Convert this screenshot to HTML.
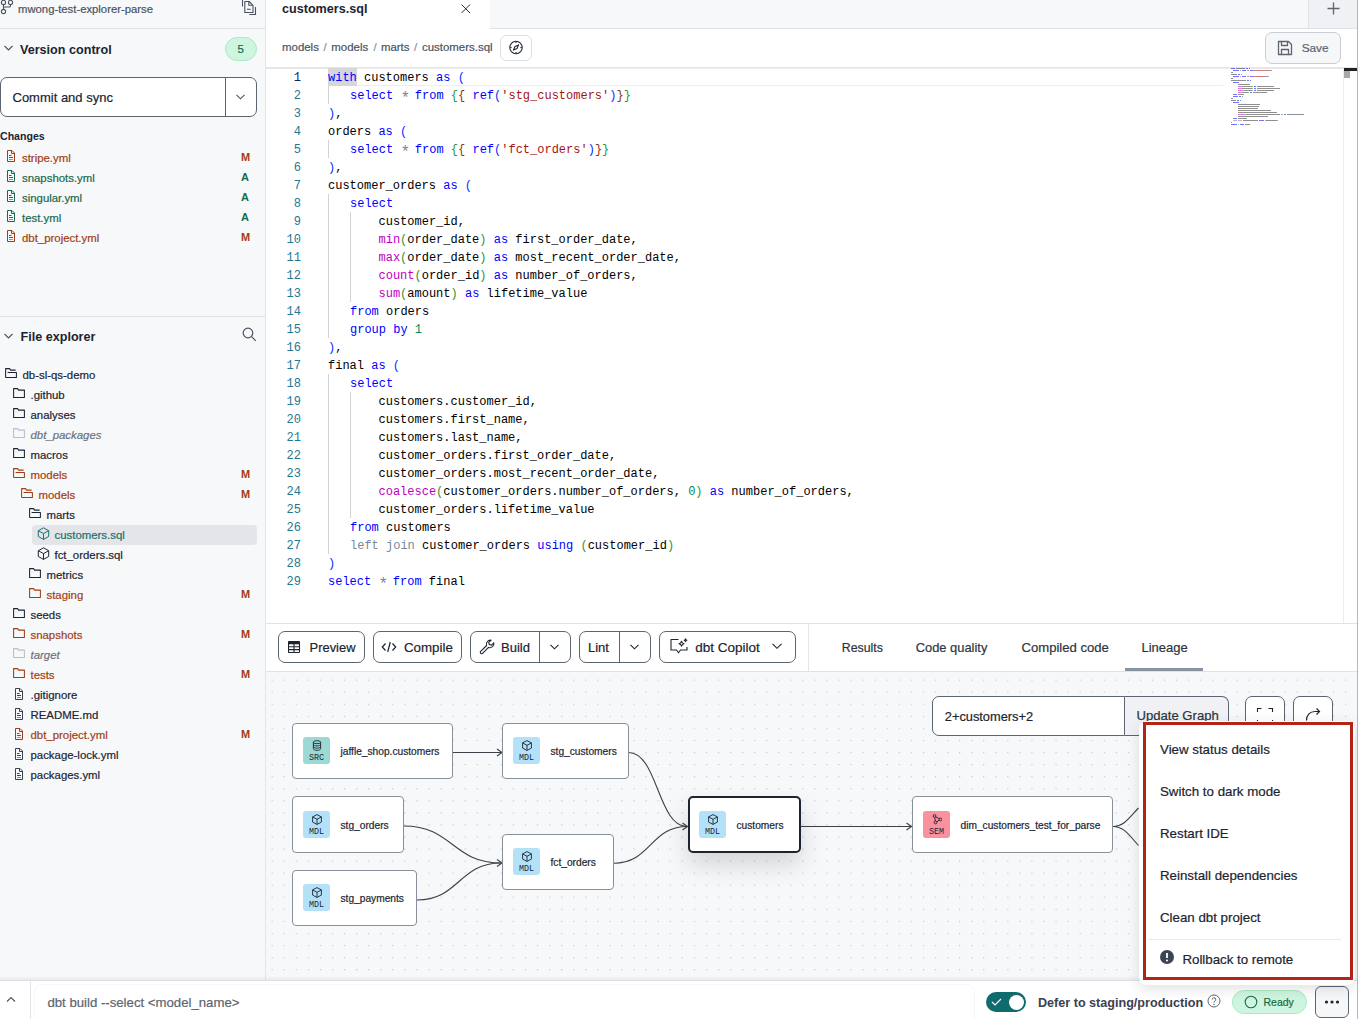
<!DOCTYPE html>
<html><head><meta charset="utf-8"><style>
html,body{margin:0;padding:0;}
body{width:1358px;height:1019px;overflow:hidden;position:relative;background:#f7f8fa;font-family:'Liberation Sans', sans-serif;}
.t{position:absolute;white-space:pre;-webkit-text-stroke-width:0.2px;}
.r{position:absolute;box-sizing:border-box;}
</style></head><body>
<div class="r" style="left:0px;top:0px;width:266px;height:1019px;background:#f7f8fa;"></div><div class="r" style="left:265px;top:0px;width:1px;height:981px;background:#e1e4e8;"></div><svg class="r" style="left:0px;top:0px;" width="16" height="16" viewBox="0 0 16 16" fill="none"><g stroke="#4b5363" stroke-width="1.1" fill="none"><circle cx="3.5" cy="2.4" r="2.1"/><circle cx="10.5" cy="2.4" r="2.1"/><circle cx="3.5" cy="11.5" r="2.1"/><path d="M3.5 4.5v4.9M10.5 4.5v1.2c0 .9-.5 1.3-1.3 1.3H3.5"/></g></svg><div class="t" style="left:18px;top:1.08px;font-size:11.3px;line-height:16px;color:#4b5363;font-family:'Liberation Sans', sans-serif;">mwong-test-explorer-parse</div><svg class="r" style="left:241px;top:0px;" width="17" height="16" viewBox="0 0 17 16" fill="none"><g stroke="#4b5363" stroke-width="1.1" stroke-linejoin="round" fill="none"><path d="M1.5 0v6.5"/><path d="M3.8 1.5h4.4l3.8 3.8v7.2H3.8z"/><path d="M7.8 1.5v3.8h4"/><path d="M6 9.3h3.5"/><path d="M14.5 7v7.5h-6.2"/></g></svg><div class="r" style="left:0px;top:28px;width:265px;height:1px;background:#dfe2e7;"></div><svg class="r" style="left:3px;top:43px;" width="11" height="10" viewBox="0 0 11 10" fill="none"><path d="M1.5 3l4 4 4-4" stroke="#4b5363" stroke-width="1.1" fill="none"/></svg><div class="t" style="left:20px;top:41.43px;font-size:12.6px;line-height:18px;color:#1c2431;font-family:'Liberation Sans', sans-serif;font-weight:bold;-webkit-text-stroke-width:0;">Version control</div><div class="r" style="left:225px;top:37px;width:32px;height:24px;background:#cdf5df;border:1px solid #a9ebc6;border-radius:12px;"></div><div class="t" style="left:237.5px;top:41.02px;font-size:11.5px;line-height:16px;color:#176b43;font-family:'Liberation Sans', sans-serif;">5</div><div class="r" style="left:0px;top:77px;width:257px;height:40px;background:#fff;border:1px solid #5d6471;border-radius:7px;"></div><div class="r" style="left:225px;top:77px;width:1px;height:40px;background:#5d6471;"></div><div class="t" style="left:12.5px;top:88.50px;font-size:13px;line-height:18px;color:#1c2431;font-family:'Liberation Sans', sans-serif;">Commit and sync</div><svg class="r" style="left:235px;top:93px;" width="11" height="8" viewBox="0 0 11 8" fill="none"><path d="M1.5 1.8l4 4 4-4" stroke="#4b5363" stroke-width="1.1" fill="none"/></svg><div class="t" style="left:0px;top:128.83px;font-size:10.6px;line-height:15px;color:#1c2431;font-family:'Liberation Sans', sans-serif;font-weight:bold;-webkit-text-stroke-width:0;">Changes</div><svg class="r" style="left:6px;top:150.0px;" width="10" height="13" viewBox="0 0 10 13" fill="none"><g stroke="#a23d13" stroke-width="1" stroke-linejoin="round" fill="none"><path d="M1.5 0.5h4.5l2.5 2.5v8.5h-7z"/><path d="M5.5 0.5v3h3"/><path d="M3 5.5h2.5M3 7.5h4"/><path d="M3 9.5h4" opacity="0.6"/></g></svg><div class="t" style="left:22px;top:149.55px;font-size:11.4px;line-height:16px;color:#a23d13;font-family:'Liberation Sans', sans-serif;">stripe.yml</div><div class="t" style="left:241px;top:150.19px;font-size:11px;line-height:15px;color:#a23d13;font-family:'Liberation Sans', sans-serif;font-weight:bold;-webkit-text-stroke-width:0;">M</div><svg class="r" style="left:6px;top:170.0px;" width="10" height="13" viewBox="0 0 10 13" fill="none"><g stroke="#17694a" stroke-width="1" stroke-linejoin="round" fill="none"><path d="M1.5 0.5h4.5l2.5 2.5v8.5h-7z"/><path d="M5.5 0.5v3h3"/><path d="M3 5.5h2.5M3 7.5h4"/><path d="M3 9.5h4" opacity="0.6"/></g></svg><div class="t" style="left:22px;top:169.55px;font-size:11.4px;line-height:16px;color:#17694a;font-family:'Liberation Sans', sans-serif;">snapshots.yml</div><div class="t" style="left:241px;top:170.19px;font-size:11px;line-height:15px;color:#17694a;font-family:'Liberation Sans', sans-serif;font-weight:bold;-webkit-text-stroke-width:0;">A</div><svg class="r" style="left:6px;top:190.0px;" width="10" height="13" viewBox="0 0 10 13" fill="none"><g stroke="#17694a" stroke-width="1" stroke-linejoin="round" fill="none"><path d="M1.5 0.5h4.5l2.5 2.5v8.5h-7z"/><path d="M5.5 0.5v3h3"/><path d="M3 5.5h2.5M3 7.5h4"/><path d="M3 9.5h4" opacity="0.6"/></g></svg><div class="t" style="left:22px;top:189.55px;font-size:11.4px;line-height:16px;color:#17694a;font-family:'Liberation Sans', sans-serif;">singular.yml</div><div class="t" style="left:241px;top:190.19px;font-size:11px;line-height:15px;color:#17694a;font-family:'Liberation Sans', sans-serif;font-weight:bold;-webkit-text-stroke-width:0;">A</div><svg class="r" style="left:6px;top:210.0px;" width="10" height="13" viewBox="0 0 10 13" fill="none"><g stroke="#17694a" stroke-width="1" stroke-linejoin="round" fill="none"><path d="M1.5 0.5h4.5l2.5 2.5v8.5h-7z"/><path d="M5.5 0.5v3h3"/><path d="M3 5.5h2.5M3 7.5h4"/><path d="M3 9.5h4" opacity="0.6"/></g></svg><div class="t" style="left:22px;top:209.55px;font-size:11.4px;line-height:16px;color:#17694a;font-family:'Liberation Sans', sans-serif;">test.yml</div><div class="t" style="left:241px;top:210.19px;font-size:11px;line-height:15px;color:#17694a;font-family:'Liberation Sans', sans-serif;font-weight:bold;-webkit-text-stroke-width:0;">A</div><svg class="r" style="left:6px;top:230.0px;" width="10" height="13" viewBox="0 0 10 13" fill="none"><g stroke="#a23d13" stroke-width="1" stroke-linejoin="round" fill="none"><path d="M1.5 0.5h4.5l2.5 2.5v8.5h-7z"/><path d="M5.5 0.5v3h3"/><path d="M3 5.5h2.5M3 7.5h4"/><path d="M3 9.5h4" opacity="0.6"/></g></svg><div class="t" style="left:22px;top:229.55px;font-size:11.4px;line-height:16px;color:#a23d13;font-family:'Liberation Sans', sans-serif;">dbt_project.yml</div><div class="t" style="left:241px;top:230.19px;font-size:11px;line-height:15px;color:#a23d13;font-family:'Liberation Sans', sans-serif;font-weight:bold;-webkit-text-stroke-width:0;">M</div><div class="r" style="left:0px;top:316px;width:265px;height:1px;background:#dfe2e7;"></div><svg class="r" style="left:3px;top:331px;" width="11" height="10" viewBox="0 0 11 10" fill="none"><path d="M1.5 3l4 4 4-4" stroke="#4b5363" stroke-width="1.1" fill="none"/></svg><div class="t" style="left:20.5px;top:327.63px;font-size:12.6px;line-height:18px;color:#1c2431;font-family:'Liberation Sans', sans-serif;font-weight:bold;-webkit-text-stroke-width:0;">File explorer</div><svg class="r" style="left:242px;top:327px;" width="15" height="15" viewBox="0 0 15 15" fill="none"><g stroke="#4b5363" stroke-width="1.2"><circle cx="6" cy="6" r="4.8"/><path d="M9.6 9.6l4.2 4.2"/></g></svg><svg class="r" style="left:5px;top:368px;" width="13" height="12" viewBox="0 0 13 12" fill="none"><g stroke="#1c2431" stroke-width="1.05" stroke-linejoin="round" fill="none"><path d="M0.6 9.5V0.6H4.6L5.6 2.1H10.6"/><path d="M2.6 4.5H11.4V9.5H0.6"/></g></svg><div class="t" style="left:22.5px;top:366.55px;font-size:11.4px;line-height:16px;color:#1c2431;font-family:'Liberation Sans', sans-serif;">db-sl-qs-demo</div><svg class="r" style="left:13px;top:388px;" width="13" height="12" viewBox="0 0 13 12" fill="none"><g stroke="#1c2431" stroke-width="1.05" stroke-linejoin="round" fill="none"><path d="M0.6 9.5V0.6H4.6L5.6 2.1H11.4V9.5Z"/></g></svg><div class="t" style="left:30.5px;top:386.55px;font-size:11.4px;line-height:16px;color:#1c2431;font-family:'Liberation Sans', sans-serif;">.github</div><svg class="r" style="left:13px;top:408px;" width="13" height="12" viewBox="0 0 13 12" fill="none"><g stroke="#1c2431" stroke-width="1.05" stroke-linejoin="round" fill="none"><path d="M0.6 9.5V0.6H4.6L5.6 2.1H11.4V9.5Z"/></g></svg><div class="t" style="left:30.5px;top:406.55px;font-size:11.4px;line-height:16px;color:#1c2431;font-family:'Liberation Sans', sans-serif;">analyses</div><svg class="r" style="left:13px;top:428px;" width="13" height="12" viewBox="0 0 13 12" fill="none"><g stroke="#b9bec6" stroke-width="1.05" stroke-linejoin="round" fill="none"><path d="M0.6 9.5V0.6H4.6L5.6 2.1H11.4V9.5Z"/></g></svg><div class="t" style="left:30.5px;top:426.55px;font-size:11.4px;line-height:16px;color:#6b7280;font-family:'Liberation Sans', sans-serif;font-style:italic;">dbt_packages</div><svg class="r" style="left:13px;top:448px;" width="13" height="12" viewBox="0 0 13 12" fill="none"><g stroke="#1c2431" stroke-width="1.05" stroke-linejoin="round" fill="none"><path d="M0.6 9.5V0.6H4.6L5.6 2.1H11.4V9.5Z"/></g></svg><div class="t" style="left:30.5px;top:446.55px;font-size:11.4px;line-height:16px;color:#1c2431;font-family:'Liberation Sans', sans-serif;">macros</div><svg class="r" style="left:13px;top:468px;" width="13" height="12" viewBox="0 0 13 12" fill="none"><g stroke="#a23d13" stroke-width="1.05" stroke-linejoin="round" fill="none"><path d="M0.6 9.5V0.6H4.6L5.6 2.1H10.6"/><path d="M2.6 4.5H11.4V9.5H0.6"/></g></svg><div class="t" style="left:30.5px;top:466.55px;font-size:11.4px;line-height:16px;color:#a23d13;font-family:'Liberation Sans', sans-serif;">models</div><div class="t" style="left:241px;top:467.19px;font-size:11px;line-height:15px;color:#a23d13;font-family:'Liberation Sans', sans-serif;font-weight:bold;-webkit-text-stroke-width:0;">M</div><svg class="r" style="left:21px;top:488px;" width="13" height="12" viewBox="0 0 13 12" fill="none"><g stroke="#a23d13" stroke-width="1.05" stroke-linejoin="round" fill="none"><path d="M0.6 9.5V0.6H4.6L5.6 2.1H10.6"/><path d="M2.6 4.5H11.4V9.5H0.6"/></g></svg><div class="t" style="left:38.5px;top:486.55px;font-size:11.4px;line-height:16px;color:#a23d13;font-family:'Liberation Sans', sans-serif;">models</div><div class="t" style="left:241px;top:487.19px;font-size:11px;line-height:15px;color:#a23d13;font-family:'Liberation Sans', sans-serif;font-weight:bold;-webkit-text-stroke-width:0;">M</div><svg class="r" style="left:29px;top:508px;" width="13" height="12" viewBox="0 0 13 12" fill="none"><g stroke="#1c2431" stroke-width="1.05" stroke-linejoin="round" fill="none"><path d="M0.6 9.5V0.6H4.6L5.6 2.1H10.6"/><path d="M2.6 4.5H11.4V9.5H0.6"/></g></svg><div class="t" style="left:46.5px;top:506.55px;font-size:11.4px;line-height:16px;color:#1c2431;font-family:'Liberation Sans', sans-serif;">marts</div><div class="r" style="left:32px;top:525px;width:225px;height:20px;background:#e3e5e9;border-radius:4px;"></div><svg class="r" style="left:37px;top:527px;" width="13" height="13" viewBox="0 0 13 13" fill="none"><g stroke="#1b7070" stroke-width="1" stroke-linejoin="round"><path d="M6.5 0.8l5.2 2.9v5.8l-5.2 2.9-5.2-2.9V3.7z"/><path d="M1.3 3.7l5.2 2.9 5.2-2.9M6.5 6.6v5.8"/></g></svg><div class="t" style="left:54.5px;top:526.55px;font-size:11.4px;line-height:16px;color:#1b7070;font-family:'Liberation Sans', sans-serif;">customers.sql</div><svg class="r" style="left:37px;top:547px;" width="13" height="13" viewBox="0 0 13 13" fill="none"><g stroke="#1c2431" stroke-width="1" stroke-linejoin="round"><path d="M6.5 0.8l5.2 2.9v5.8l-5.2 2.9-5.2-2.9V3.7z"/><path d="M1.3 3.7l5.2 2.9 5.2-2.9M6.5 6.6v5.8"/></g></svg><div class="t" style="left:54.5px;top:546.55px;font-size:11.4px;line-height:16px;color:#1c2431;font-family:'Liberation Sans', sans-serif;">fct_orders.sql</div><svg class="r" style="left:29px;top:568px;" width="13" height="12" viewBox="0 0 13 12" fill="none"><g stroke="#1c2431" stroke-width="1.05" stroke-linejoin="round" fill="none"><path d="M0.6 9.5V0.6H4.6L5.6 2.1H11.4V9.5Z"/></g></svg><div class="t" style="left:46.5px;top:566.55px;font-size:11.4px;line-height:16px;color:#1c2431;font-family:'Liberation Sans', sans-serif;">metrics</div><svg class="r" style="left:29px;top:588px;" width="13" height="12" viewBox="0 0 13 12" fill="none"><g stroke="#a23d13" stroke-width="1.05" stroke-linejoin="round" fill="none"><path d="M0.6 9.5V0.6H4.6L5.6 2.1H11.4V9.5Z"/></g></svg><div class="t" style="left:46.5px;top:586.55px;font-size:11.4px;line-height:16px;color:#a23d13;font-family:'Liberation Sans', sans-serif;">staging</div><div class="t" style="left:241px;top:587.19px;font-size:11px;line-height:15px;color:#a23d13;font-family:'Liberation Sans', sans-serif;font-weight:bold;-webkit-text-stroke-width:0;">M</div><svg class="r" style="left:13px;top:608px;" width="13" height="12" viewBox="0 0 13 12" fill="none"><g stroke="#1c2431" stroke-width="1.05" stroke-linejoin="round" fill="none"><path d="M0.6 9.5V0.6H4.6L5.6 2.1H11.4V9.5Z"/></g></svg><div class="t" style="left:30.5px;top:606.55px;font-size:11.4px;line-height:16px;color:#1c2431;font-family:'Liberation Sans', sans-serif;">seeds</div><svg class="r" style="left:13px;top:628px;" width="13" height="12" viewBox="0 0 13 12" fill="none"><g stroke="#a23d13" stroke-width="1.05" stroke-linejoin="round" fill="none"><path d="M0.6 9.5V0.6H4.6L5.6 2.1H11.4V9.5Z"/></g></svg><div class="t" style="left:30.5px;top:626.55px;font-size:11.4px;line-height:16px;color:#a23d13;font-family:'Liberation Sans', sans-serif;">snapshots</div><div class="t" style="left:241px;top:627.19px;font-size:11px;line-height:15px;color:#a23d13;font-family:'Liberation Sans', sans-serif;font-weight:bold;-webkit-text-stroke-width:0;">M</div><svg class="r" style="left:13px;top:648px;" width="13" height="12" viewBox="0 0 13 12" fill="none"><g stroke="#b9bec6" stroke-width="1.05" stroke-linejoin="round" fill="none"><path d="M0.6 9.5V0.6H4.6L5.6 2.1H11.4V9.5Z"/></g></svg><div class="t" style="left:30.5px;top:646.55px;font-size:11.4px;line-height:16px;color:#6b7280;font-family:'Liberation Sans', sans-serif;font-style:italic;">target</div><svg class="r" style="left:13px;top:668px;" width="13" height="12" viewBox="0 0 13 12" fill="none"><g stroke="#a23d13" stroke-width="1.05" stroke-linejoin="round" fill="none"><path d="M0.6 9.5V0.6H4.6L5.6 2.1H11.4V9.5Z"/></g></svg><div class="t" style="left:30.5px;top:666.55px;font-size:11.4px;line-height:16px;color:#a23d13;font-family:'Liberation Sans', sans-serif;">tests</div><div class="t" style="left:241px;top:667.19px;font-size:11px;line-height:15px;color:#a23d13;font-family:'Liberation Sans', sans-serif;font-weight:bold;-webkit-text-stroke-width:0;">M</div><svg class="r" style="left:14px;top:688px;" width="10" height="13" viewBox="0 0 10 13" fill="none"><g stroke="#3b4250" stroke-width="1" stroke-linejoin="round" fill="none"><path d="M1.5 0.5h4.5l2.5 2.5v8.5h-7z"/><path d="M5.5 0.5v3h3"/><path d="M3 5.5h2.5M3 7.5h4"/><path d="M3 9.5h4" opacity="0.6"/></g></svg><div class="t" style="left:30.5px;top:686.55px;font-size:11.4px;line-height:16px;color:#1c2431;font-family:'Liberation Sans', sans-serif;">.gitignore</div><svg class="r" style="left:14px;top:708px;" width="10" height="13" viewBox="0 0 10 13" fill="none"><g stroke="#3b4250" stroke-width="1" stroke-linejoin="round" fill="none"><path d="M1.5 0.5h4.5l2.5 2.5v8.5h-7z"/><path d="M5.5 0.5v3h3"/><path d="M3 5.5h2.5M3 7.5h4"/><path d="M3 9.5h4" opacity="0.6"/></g></svg><div class="t" style="left:30.5px;top:706.55px;font-size:11.4px;line-height:16px;color:#1c2431;font-family:'Liberation Sans', sans-serif;">README.md</div><svg class="r" style="left:14px;top:728px;" width="10" height="13" viewBox="0 0 10 13" fill="none"><g stroke="#a23d13" stroke-width="1" stroke-linejoin="round" fill="none"><path d="M1.5 0.5h4.5l2.5 2.5v8.5h-7z"/><path d="M5.5 0.5v3h3"/><path d="M3 5.5h2.5M3 7.5h4"/><path d="M3 9.5h4" opacity="0.6"/></g></svg><div class="t" style="left:30.5px;top:726.55px;font-size:11.4px;line-height:16px;color:#a23d13;font-family:'Liberation Sans', sans-serif;">dbt_project.yml</div><div class="t" style="left:241px;top:727.19px;font-size:11px;line-height:15px;color:#a23d13;font-family:'Liberation Sans', sans-serif;font-weight:bold;-webkit-text-stroke-width:0;">M</div><svg class="r" style="left:14px;top:748px;" width="10" height="13" viewBox="0 0 10 13" fill="none"><g stroke="#3b4250" stroke-width="1" stroke-linejoin="round" fill="none"><path d="M1.5 0.5h4.5l2.5 2.5v8.5h-7z"/><path d="M5.5 0.5v3h3"/><path d="M3 5.5h2.5M3 7.5h4"/><path d="M3 9.5h4" opacity="0.6"/></g></svg><div class="t" style="left:30.5px;top:746.55px;font-size:11.4px;line-height:16px;color:#1c2431;font-family:'Liberation Sans', sans-serif;">package-lock.yml</div><svg class="r" style="left:14px;top:768px;" width="10" height="13" viewBox="0 0 10 13" fill="none"><g stroke="#3b4250" stroke-width="1" stroke-linejoin="round" fill="none"><path d="M1.5 0.5h4.5l2.5 2.5v8.5h-7z"/><path d="M5.5 0.5v3h3"/><path d="M3 5.5h2.5M3 7.5h4"/><path d="M3 9.5h4" opacity="0.6"/></g></svg><div class="t" style="left:30.5px;top:766.55px;font-size:11.4px;line-height:16px;color:#1c2431;font-family:'Liberation Sans', sans-serif;">packages.yml</div><div class="r" style="left:266px;top:0px;width:1092px;height:28px;background:#f7f8fa;"></div><div class="r" style="left:266px;top:28px;width:1092px;height:1px;background:#dfe2e7;"></div><div class="r" style="left:266px;top:0px;width:224px;height:29px;background:#fff;"></div><div class="t" style="left:282px;top:-0.37px;font-size:12.6px;line-height:18px;color:#1c2431;font-family:'Liberation Sans', sans-serif;font-weight:bold;-webkit-text-stroke-width:0;">customers.sql</div><svg class="r" style="left:460px;top:3px;" width="11" height="11" viewBox="0 0 11 11" fill="none"><path d="M1.5 1.5l8.5 8.5M10 1.5l-8.5 8.5" stroke="#1c2431" stroke-width="0.95"/></svg><div class="r" style="left:1308px;top:0px;width:50px;height:28px;background:#f0f1f4;border-left:1px solid #dfe2e7;"></div><svg class="r" style="left:1327px;top:2px;" width="13" height="13" viewBox="0 0 13 13" fill="none"><path d="M6.5 0.5v12M0.5 6.5h12" stroke="#5d6471" stroke-width="1.3"/></svg><div class="r" style="left:266px;top:29px;width:1092px;height:39px;background:#fff;"></div><div class="t" style="left:282px;top:39.03px;font-size:11.45px;line-height:16px;color:#4b5363;font-family:'Liberation Sans', sans-serif;">models</div><div class="t" style="left:323.5px;top:39.03px;font-size:11.45px;line-height:16px;color:#8a909a;font-family:'Liberation Sans', sans-serif;">/</div><div class="t" style="left:331.3px;top:39.03px;font-size:11.45px;line-height:16px;color:#4b5363;font-family:'Liberation Sans', sans-serif;">models</div><div class="t" style="left:373.5px;top:39.03px;font-size:11.45px;line-height:16px;color:#8a909a;font-family:'Liberation Sans', sans-serif;">/</div><div class="t" style="left:380.9px;top:39.03px;font-size:11.45px;line-height:16px;color:#4b5363;font-family:'Liberation Sans', sans-serif;">marts</div><div class="t" style="left:414px;top:39.03px;font-size:11.45px;line-height:16px;color:#8a909a;font-family:'Liberation Sans', sans-serif;">/</div><div class="t" style="left:422px;top:39.03px;font-size:11.45px;line-height:16px;color:#4b5363;font-family:'Liberation Sans', sans-serif;">customers.sql</div><div class="r" style="left:500px;top:35px;width:32px;height:26px;background:#fff;border:1px solid #dde0e5;border-radius:6px;"></div><svg class="r" style="left:508px;top:40px;" width="16" height="16" viewBox="0 0 16 16" fill="none"><g stroke="#1c2431" stroke-width="1.1"><circle cx="8" cy="7.5" r="6.2"/><path d="M8 1.8v1.3M8 11.9v1.3M2.3 7.5h1.3M12.4 7.5h1.3"/><path d="M10.6 4.9L9 8.5 5.4 10.1 7 6.5z" stroke-linejoin="round"/></g></svg><div class="r" style="left:1265px;top:32px;width:76px;height:32px;background:#f6f7f9;border:1px solid #c9ced6;border-radius:7px;"></div><svg class="r" style="left:1277px;top:40px;" width="16" height="16" viewBox="0 0 16 16" fill="none"><g stroke="#5d6471" stroke-width="1.3" stroke-linejoin="round"><path d="M1.5 1.5h10l3 3v10h-13z"/><path d="M4.5 1.5v4h6v-4"/><path d="M4.5 14.5v-5h7v5"/></g></svg><div class="t" style="left:1301.7px;top:40.41px;font-size:11.8px;line-height:17px;color:#5d6471;font-family:'Liberation Sans', sans-serif;">Save</div><div class="r" style="left:266px;top:67px;width:1092px;height:2px;background:#e4e6ea;"></div><div class="r" style="left:266px;top:69px;width:1092px;height:554px;background:#fff;"></div><div class="r" style="left:328px;top:68px;width:895px;height:18px;border-top:1px solid #eeeeee;border-bottom:1px solid #eeeeee;"></div><div class="r" style="left:328px;top:68px;width:29px;height:18px;background:#d7d7d7;"></div><div class="r" style="left:328px;top:86px;width:1px;height:18px;background:#d3d3d3;"></div><div class="r" style="left:328px;top:140px;width:1px;height:18px;background:#d3d3d3;"></div><div class="r" style="left:328px;top:194px;width:1px;height:144px;background:#d3d3d3;"></div><div class="r" style="left:328px;top:374px;width:1px;height:180px;background:#d3d3d3;"></div><div class="r" style="left:350px;top:212px;width:1px;height:90px;background:#d3d3d3;"></div><div class="r" style="left:350px;top:392px;width:1px;height:126px;background:#d3d3d3;"></div><div class="t" style="left:293.8px;top:70.00px;font-size:12px;line-height:17px;color:#0b216f;font-family:'Liberation Mono', monospace;-webkit-text-stroke-width:0;">1</div><div class="t" style="left:328px;top:70.00px;font-size:12px;line-height:17px;color:#000000;font-family:'Liberation Mono', monospace;-webkit-text-stroke-width:0;"><span style="color:#0000ff">with</span> customers <span style="color:#0000ff">as</span> <span style="color:#0431fa">(</span></div><div class="t" style="left:293.8px;top:88.00px;font-size:12px;line-height:17px;color:#237893;font-family:'Liberation Mono', monospace;-webkit-text-stroke-width:0;">2</div><div class="t" style="left:350px;top:88.00px;font-size:12px;line-height:17px;color:#000000;font-family:'Liberation Mono', monospace;-webkit-text-stroke-width:0;"><span style="color:#0000ff">select</span> <span style="display:inline-block;width:7.2px;text-align:center;position:relative;top:4px;font-size:16px;line-height:0;color:#778899">*</span> <span style="color:#0000ff">from</span> <span style="color:#319331">{</span><span style="color:#7b3814">{</span> <span style="color:#0000ff">ref</span><span style="color:#0431fa">(</span><span style="color:#a31515">'stg_customers'</span><span style="color:#0431fa">)</span><span style="color:#7b3814">}</span><span style="color:#319331">}</span></div><div class="t" style="left:293.8px;top:106.00px;font-size:12px;line-height:17px;color:#237893;font-family:'Liberation Mono', monospace;-webkit-text-stroke-width:0;">3</div><div class="t" style="left:328px;top:106.00px;font-size:12px;line-height:17px;color:#000000;font-family:'Liberation Mono', monospace;-webkit-text-stroke-width:0;"><span style="color:#0431fa">)</span>,</div><div class="t" style="left:293.8px;top:124.00px;font-size:12px;line-height:17px;color:#237893;font-family:'Liberation Mono', monospace;-webkit-text-stroke-width:0;">4</div><div class="t" style="left:328px;top:124.00px;font-size:12px;line-height:17px;color:#000000;font-family:'Liberation Mono', monospace;-webkit-text-stroke-width:0;">orders <span style="color:#0000ff">as</span> <span style="color:#0431fa">(</span></div><div class="t" style="left:293.8px;top:142.00px;font-size:12px;line-height:17px;color:#237893;font-family:'Liberation Mono', monospace;-webkit-text-stroke-width:0;">5</div><div class="t" style="left:350px;top:142.00px;font-size:12px;line-height:17px;color:#000000;font-family:'Liberation Mono', monospace;-webkit-text-stroke-width:0;"><span style="color:#0000ff">select</span> <span style="display:inline-block;width:7.2px;text-align:center;position:relative;top:4px;font-size:16px;line-height:0;color:#778899">*</span> <span style="color:#0000ff">from</span> <span style="color:#319331">{</span><span style="color:#7b3814">{</span> <span style="color:#0000ff">ref</span><span style="color:#0431fa">(</span><span style="color:#a31515">'fct_orders'</span><span style="color:#0431fa">)</span><span style="color:#7b3814">}</span><span style="color:#319331">}</span></div><div class="t" style="left:293.8px;top:160.00px;font-size:12px;line-height:17px;color:#237893;font-family:'Liberation Mono', monospace;-webkit-text-stroke-width:0;">6</div><div class="t" style="left:328px;top:160.00px;font-size:12px;line-height:17px;color:#000000;font-family:'Liberation Mono', monospace;-webkit-text-stroke-width:0;"><span style="color:#0431fa">)</span>,</div><div class="t" style="left:293.8px;top:178.00px;font-size:12px;line-height:17px;color:#237893;font-family:'Liberation Mono', monospace;-webkit-text-stroke-width:0;">7</div><div class="t" style="left:328px;top:178.00px;font-size:12px;line-height:17px;color:#000000;font-family:'Liberation Mono', monospace;-webkit-text-stroke-width:0;">customer_orders <span style="color:#0000ff">as</span> <span style="color:#0431fa">(</span></div><div class="t" style="left:293.8px;top:196.00px;font-size:12px;line-height:17px;color:#237893;font-family:'Liberation Mono', monospace;-webkit-text-stroke-width:0;">8</div><div class="t" style="left:350px;top:196.00px;font-size:12px;line-height:17px;color:#000000;font-family:'Liberation Mono', monospace;-webkit-text-stroke-width:0;"><span style="color:#0000ff">select</span></div><div class="t" style="left:293.8px;top:214.00px;font-size:12px;line-height:17px;color:#237893;font-family:'Liberation Mono', monospace;-webkit-text-stroke-width:0;">9</div><div class="t" style="left:378.5px;top:214.00px;font-size:12px;line-height:17px;color:#000000;font-family:'Liberation Mono', monospace;-webkit-text-stroke-width:0;">customer_id,</div><div class="t" style="left:286.6px;top:232.00px;font-size:12px;line-height:17px;color:#237893;font-family:'Liberation Mono', monospace;-webkit-text-stroke-width:0;">10</div><div class="t" style="left:378.5px;top:232.00px;font-size:12px;line-height:17px;color:#000000;font-family:'Liberation Mono', monospace;-webkit-text-stroke-width:0;"><span style="color:#c000c0">min</span><span style="color:#319331">(</span>order_date<span style="color:#319331">)</span> <span style="color:#0000ff">as</span> first_order_date,</div><div class="t" style="left:286.6px;top:250.00px;font-size:12px;line-height:17px;color:#237893;font-family:'Liberation Mono', monospace;-webkit-text-stroke-width:0;">11</div><div class="t" style="left:378.5px;top:250.00px;font-size:12px;line-height:17px;color:#000000;font-family:'Liberation Mono', monospace;-webkit-text-stroke-width:0;"><span style="color:#c000c0">max</span><span style="color:#319331">(</span>order_date<span style="color:#319331">)</span> <span style="color:#0000ff">as</span> most_recent_order_date,</div><div class="t" style="left:286.6px;top:268.00px;font-size:12px;line-height:17px;color:#237893;font-family:'Liberation Mono', monospace;-webkit-text-stroke-width:0;">12</div><div class="t" style="left:378.5px;top:268.00px;font-size:12px;line-height:17px;color:#000000;font-family:'Liberation Mono', monospace;-webkit-text-stroke-width:0;"><span style="color:#c000c0">count</span><span style="color:#319331">(</span>order_id<span style="color:#319331">)</span> <span style="color:#0000ff">as</span> number_of_orders,</div><div class="t" style="left:286.6px;top:286.00px;font-size:12px;line-height:17px;color:#237893;font-family:'Liberation Mono', monospace;-webkit-text-stroke-width:0;">13</div><div class="t" style="left:378.5px;top:286.00px;font-size:12px;line-height:17px;color:#000000;font-family:'Liberation Mono', monospace;-webkit-text-stroke-width:0;"><span style="color:#c000c0">sum</span><span style="color:#319331">(</span>amount<span style="color:#319331">)</span> <span style="color:#0000ff">as</span> lifetime_value</div><div class="t" style="left:286.6px;top:304.00px;font-size:12px;line-height:17px;color:#237893;font-family:'Liberation Mono', monospace;-webkit-text-stroke-width:0;">14</div><div class="t" style="left:350px;top:304.00px;font-size:12px;line-height:17px;color:#000000;font-family:'Liberation Mono', monospace;-webkit-text-stroke-width:0;"><span style="color:#0000ff">from</span> orders</div><div class="t" style="left:286.6px;top:322.00px;font-size:12px;line-height:17px;color:#237893;font-family:'Liberation Mono', monospace;-webkit-text-stroke-width:0;">15</div><div class="t" style="left:350px;top:322.00px;font-size:12px;line-height:17px;color:#000000;font-family:'Liberation Mono', monospace;-webkit-text-stroke-width:0;"><span style="color:#0000ff">group</span> <span style="color:#0000ff">by</span> <span style="color:#098658">1</span></div><div class="t" style="left:286.6px;top:340.00px;font-size:12px;line-height:17px;color:#237893;font-family:'Liberation Mono', monospace;-webkit-text-stroke-width:0;">16</div><div class="t" style="left:328px;top:340.00px;font-size:12px;line-height:17px;color:#000000;font-family:'Liberation Mono', monospace;-webkit-text-stroke-width:0;"><span style="color:#0431fa">)</span>,</div><div class="t" style="left:286.6px;top:358.00px;font-size:12px;line-height:17px;color:#237893;font-family:'Liberation Mono', monospace;-webkit-text-stroke-width:0;">17</div><div class="t" style="left:328px;top:358.00px;font-size:12px;line-height:17px;color:#000000;font-family:'Liberation Mono', monospace;-webkit-text-stroke-width:0;">final <span style="color:#0000ff">as</span> <span style="color:#0431fa">(</span></div><div class="t" style="left:286.6px;top:376.00px;font-size:12px;line-height:17px;color:#237893;font-family:'Liberation Mono', monospace;-webkit-text-stroke-width:0;">18</div><div class="t" style="left:350px;top:376.00px;font-size:12px;line-height:17px;color:#000000;font-family:'Liberation Mono', monospace;-webkit-text-stroke-width:0;"><span style="color:#0000ff">select</span></div><div class="t" style="left:286.6px;top:394.00px;font-size:12px;line-height:17px;color:#237893;font-family:'Liberation Mono', monospace;-webkit-text-stroke-width:0;">19</div><div class="t" style="left:378.5px;top:394.00px;font-size:12px;line-height:17px;color:#000000;font-family:'Liberation Mono', monospace;-webkit-text-stroke-width:0;">customers.customer_id,</div><div class="t" style="left:286.6px;top:412.00px;font-size:12px;line-height:17px;color:#237893;font-family:'Liberation Mono', monospace;-webkit-text-stroke-width:0;">20</div><div class="t" style="left:378.5px;top:412.00px;font-size:12px;line-height:17px;color:#000000;font-family:'Liberation Mono', monospace;-webkit-text-stroke-width:0;">customers.first_name,</div><div class="t" style="left:286.6px;top:430.00px;font-size:12px;line-height:17px;color:#237893;font-family:'Liberation Mono', monospace;-webkit-text-stroke-width:0;">21</div><div class="t" style="left:378.5px;top:430.00px;font-size:12px;line-height:17px;color:#000000;font-family:'Liberation Mono', monospace;-webkit-text-stroke-width:0;">customers.last_name,</div><div class="t" style="left:286.6px;top:448.00px;font-size:12px;line-height:17px;color:#237893;font-family:'Liberation Mono', monospace;-webkit-text-stroke-width:0;">22</div><div class="t" style="left:378.5px;top:448.00px;font-size:12px;line-height:17px;color:#000000;font-family:'Liberation Mono', monospace;-webkit-text-stroke-width:0;">customer_orders.first_order_date,</div><div class="t" style="left:286.6px;top:466.00px;font-size:12px;line-height:17px;color:#237893;font-family:'Liberation Mono', monospace;-webkit-text-stroke-width:0;">23</div><div class="t" style="left:378.5px;top:466.00px;font-size:12px;line-height:17px;color:#000000;font-family:'Liberation Mono', monospace;-webkit-text-stroke-width:0;">customer_orders.most_recent_order_date,</div><div class="t" style="left:286.6px;top:484.00px;font-size:12px;line-height:17px;color:#237893;font-family:'Liberation Mono', monospace;-webkit-text-stroke-width:0;">24</div><div class="t" style="left:378.5px;top:484.00px;font-size:12px;line-height:17px;color:#000000;font-family:'Liberation Mono', monospace;-webkit-text-stroke-width:0;"><span style="color:#c000c0">coalesce</span><span style="color:#319331">(</span>customer_orders.number_of_orders, <span style="color:#098658">0</span><span style="color:#319331">)</span> <span style="color:#0000ff">as</span> number_of_orders,</div><div class="t" style="left:286.6px;top:502.00px;font-size:12px;line-height:17px;color:#237893;font-family:'Liberation Mono', monospace;-webkit-text-stroke-width:0;">25</div><div class="t" style="left:378.5px;top:502.00px;font-size:12px;line-height:17px;color:#000000;font-family:'Liberation Mono', monospace;-webkit-text-stroke-width:0;">customer_orders.lifetime_value</div><div class="t" style="left:286.6px;top:520.00px;font-size:12px;line-height:17px;color:#237893;font-family:'Liberation Mono', monospace;-webkit-text-stroke-width:0;">26</div><div class="t" style="left:350px;top:520.00px;font-size:12px;line-height:17px;color:#000000;font-family:'Liberation Mono', monospace;-webkit-text-stroke-width:0;"><span style="color:#0000ff">from</span> customers</div><div class="t" style="left:286.6px;top:538.00px;font-size:12px;line-height:17px;color:#237893;font-family:'Liberation Mono', monospace;-webkit-text-stroke-width:0;">27</div><div class="t" style="left:350px;top:538.00px;font-size:12px;line-height:17px;color:#000000;font-family:'Liberation Mono', monospace;-webkit-text-stroke-width:0;"><span style="color:#778899">left join</span> customer_orders <span style="color:#0000ff">using</span> <span style="color:#319331">(</span>customer_id<span style="color:#319331">)</span></div><div class="t" style="left:286.6px;top:556.00px;font-size:12px;line-height:17px;color:#237893;font-family:'Liberation Mono', monospace;-webkit-text-stroke-width:0;">28</div><div class="t" style="left:328px;top:556.00px;font-size:12px;line-height:17px;color:#000000;font-family:'Liberation Mono', monospace;-webkit-text-stroke-width:0;"><span style="color:#0431fa">)</span></div><div class="t" style="left:286.6px;top:574.00px;font-size:12px;line-height:17px;color:#237893;font-family:'Liberation Mono', monospace;-webkit-text-stroke-width:0;">29</div><div class="t" style="left:328px;top:574.00px;font-size:12px;line-height:17px;color:#000000;font-family:'Liberation Mono', monospace;-webkit-text-stroke-width:0;"><span style="color:#0000ff">select</span> <span style="display:inline-block;width:7.2px;text-align:center;position:relative;top:4px;font-size:16px;line-height:0;color:#778899">*</span> <span style="color:#0000ff">from</span> final</div><div class="r" style="left:1231.0px;top:68.0px;width:4.0px;height:1.4px;background:#0000ff;opacity:0.55;"></div><div class="r" style="left:1236.0px;top:68.0px;width:9.0px;height:1.4px;background:#333333;opacity:0.55;"></div><div class="r" style="left:1246.0px;top:68.0px;width:2.0px;height:1.4px;background:#0000ff;opacity:0.55;"></div><div class="r" style="left:1249.0px;top:68.0px;width:1.0px;height:1.4px;background:#0431fa;opacity:0.55;"></div><div class="r" style="left:1233.0px;top:70.0px;width:6.0px;height:1.4px;background:#0000ff;opacity:0.55;"></div><div class="r" style="left:1240.0px;top:70.0px;width:1.0px;height:1.4px;background:#778899;opacity:0.55;"></div><div class="r" style="left:1242.0px;top:70.0px;width:4.0px;height:1.4px;background:#0000ff;opacity:0.55;"></div><div class="r" style="left:1247.0px;top:70.0px;width:1.0px;height:1.4px;background:#319331;opacity:0.55;"></div><div class="r" style="left:1248.0px;top:70.0px;width:1.0px;height:1.4px;background:#7b3814;opacity:0.55;"></div><div class="r" style="left:1250.0px;top:70.0px;width:3.0px;height:1.4px;background:#0000ff;opacity:0.55;"></div><div class="r" style="left:1253.0px;top:70.0px;width:1.0px;height:1.4px;background:#0431fa;opacity:0.55;"></div><div class="r" style="left:1254.0px;top:70.0px;width:15.0px;height:1.4px;background:#a31515;opacity:0.55;"></div><div class="r" style="left:1269.0px;top:70.0px;width:1.0px;height:1.4px;background:#0431fa;opacity:0.55;"></div><div class="r" style="left:1270.0px;top:70.0px;width:1.0px;height:1.4px;background:#7b3814;opacity:0.55;"></div><div class="r" style="left:1271.0px;top:70.0px;width:1.0px;height:1.4px;background:#319331;opacity:0.55;"></div><div class="r" style="left:1231.0px;top:72.0px;width:1.0px;height:1.4px;background:#0431fa;opacity:0.55;"></div><div class="r" style="left:1232.0px;top:72.0px;width:1.0px;height:1.4px;background:#333333;opacity:0.55;"></div><div class="r" style="left:1231.0px;top:74.0px;width:6.0px;height:1.4px;background:#333333;opacity:0.55;"></div><div class="r" style="left:1238.0px;top:74.0px;width:2.0px;height:1.4px;background:#0000ff;opacity:0.55;"></div><div class="r" style="left:1241.0px;top:74.0px;width:1.0px;height:1.4px;background:#0431fa;opacity:0.55;"></div><div class="r" style="left:1233.0px;top:76.0px;width:6.0px;height:1.4px;background:#0000ff;opacity:0.55;"></div><div class="r" style="left:1240.0px;top:76.0px;width:1.0px;height:1.4px;background:#778899;opacity:0.55;"></div><div class="r" style="left:1242.0px;top:76.0px;width:4.0px;height:1.4px;background:#0000ff;opacity:0.55;"></div><div class="r" style="left:1247.0px;top:76.0px;width:1.0px;height:1.4px;background:#319331;opacity:0.55;"></div><div class="r" style="left:1248.0px;top:76.0px;width:1.0px;height:1.4px;background:#7b3814;opacity:0.55;"></div><div class="r" style="left:1250.0px;top:76.0px;width:3.0px;height:1.4px;background:#0000ff;opacity:0.55;"></div><div class="r" style="left:1253.0px;top:76.0px;width:1.0px;height:1.4px;background:#0431fa;opacity:0.55;"></div><div class="r" style="left:1254.0px;top:76.0px;width:12.0px;height:1.4px;background:#a31515;opacity:0.55;"></div><div class="r" style="left:1266.0px;top:76.0px;width:1.0px;height:1.4px;background:#0431fa;opacity:0.55;"></div><div class="r" style="left:1267.0px;top:76.0px;width:1.0px;height:1.4px;background:#7b3814;opacity:0.55;"></div><div class="r" style="left:1268.0px;top:76.0px;width:1.0px;height:1.4px;background:#319331;opacity:0.55;"></div><div class="r" style="left:1231.0px;top:78.0px;width:1.0px;height:1.4px;background:#0431fa;opacity:0.55;"></div><div class="r" style="left:1232.0px;top:78.0px;width:1.0px;height:1.4px;background:#333333;opacity:0.55;"></div><div class="r" style="left:1231.0px;top:80.0px;width:15.0px;height:1.4px;background:#333333;opacity:0.55;"></div><div class="r" style="left:1247.0px;top:80.0px;width:2.0px;height:1.4px;background:#0000ff;opacity:0.55;"></div><div class="r" style="left:1250.0px;top:80.0px;width:1.0px;height:1.4px;background:#0431fa;opacity:0.55;"></div><div class="r" style="left:1233.0px;top:82.0px;width:6.0px;height:1.4px;background:#0000ff;opacity:0.55;"></div><div class="r" style="left:1238.0px;top:84.0px;width:12.0px;height:1.4px;background:#333333;opacity:0.55;"></div><div class="r" style="left:1238.0px;top:86.0px;width:3.0px;height:1.4px;background:#c000c0;opacity:0.55;"></div><div class="r" style="left:1241.0px;top:86.0px;width:1.0px;height:1.4px;background:#319331;opacity:0.55;"></div><div class="r" style="left:1242.0px;top:86.0px;width:10.0px;height:1.4px;background:#333333;opacity:0.55;"></div><div class="r" style="left:1252.0px;top:86.0px;width:1.0px;height:1.4px;background:#319331;opacity:0.55;"></div><div class="r" style="left:1254.0px;top:86.0px;width:2.0px;height:1.4px;background:#0000ff;opacity:0.55;"></div><div class="r" style="left:1257.0px;top:86.0px;width:17.0px;height:1.4px;background:#333333;opacity:0.55;"></div><div class="r" style="left:1238.0px;top:88.0px;width:3.0px;height:1.4px;background:#c000c0;opacity:0.55;"></div><div class="r" style="left:1241.0px;top:88.0px;width:1.0px;height:1.4px;background:#319331;opacity:0.55;"></div><div class="r" style="left:1242.0px;top:88.0px;width:10.0px;height:1.4px;background:#333333;opacity:0.55;"></div><div class="r" style="left:1252.0px;top:88.0px;width:1.0px;height:1.4px;background:#319331;opacity:0.55;"></div><div class="r" style="left:1254.0px;top:88.0px;width:2.0px;height:1.4px;background:#0000ff;opacity:0.55;"></div><div class="r" style="left:1257.0px;top:88.0px;width:23.0px;height:1.4px;background:#333333;opacity:0.55;"></div><div class="r" style="left:1238.0px;top:90.0px;width:5.0px;height:1.4px;background:#c000c0;opacity:0.55;"></div><div class="r" style="left:1243.0px;top:90.0px;width:1.0px;height:1.4px;background:#319331;opacity:0.55;"></div><div class="r" style="left:1244.0px;top:90.0px;width:8.0px;height:1.4px;background:#333333;opacity:0.55;"></div><div class="r" style="left:1252.0px;top:90.0px;width:1.0px;height:1.4px;background:#319331;opacity:0.55;"></div><div class="r" style="left:1254.0px;top:90.0px;width:2.0px;height:1.4px;background:#0000ff;opacity:0.55;"></div><div class="r" style="left:1257.0px;top:90.0px;width:17.0px;height:1.4px;background:#333333;opacity:0.55;"></div><div class="r" style="left:1238.0px;top:92.0px;width:3.0px;height:1.4px;background:#c000c0;opacity:0.55;"></div><div class="r" style="left:1241.0px;top:92.0px;width:1.0px;height:1.4px;background:#319331;opacity:0.55;"></div><div class="r" style="left:1242.0px;top:92.0px;width:6.0px;height:1.4px;background:#333333;opacity:0.55;"></div><div class="r" style="left:1248.0px;top:92.0px;width:1.0px;height:1.4px;background:#319331;opacity:0.55;"></div><div class="r" style="left:1250.0px;top:92.0px;width:2.0px;height:1.4px;background:#0000ff;opacity:0.55;"></div><div class="r" style="left:1253.0px;top:92.0px;width:14.0px;height:1.4px;background:#333333;opacity:0.55;"></div><div class="r" style="left:1233.0px;top:94.0px;width:4.0px;height:1.4px;background:#0000ff;opacity:0.55;"></div><div class="r" style="left:1238.0px;top:94.0px;width:6.0px;height:1.4px;background:#333333;opacity:0.55;"></div><div class="r" style="left:1233.0px;top:96.0px;width:5.0px;height:1.4px;background:#0000ff;opacity:0.55;"></div><div class="r" style="left:1239.0px;top:96.0px;width:2.0px;height:1.4px;background:#0000ff;opacity:0.55;"></div><div class="r" style="left:1242.0px;top:96.0px;width:1.0px;height:1.4px;background:#098658;opacity:0.55;"></div><div class="r" style="left:1231.0px;top:98.0px;width:1.0px;height:1.4px;background:#0431fa;opacity:0.55;"></div><div class="r" style="left:1232.0px;top:98.0px;width:1.0px;height:1.4px;background:#333333;opacity:0.55;"></div><div class="r" style="left:1231.0px;top:100.0px;width:5.0px;height:1.4px;background:#333333;opacity:0.55;"></div><div class="r" style="left:1237.0px;top:100.0px;width:2.0px;height:1.4px;background:#0000ff;opacity:0.55;"></div><div class="r" style="left:1240.0px;top:100.0px;width:1.0px;height:1.4px;background:#0431fa;opacity:0.55;"></div><div class="r" style="left:1233.0px;top:102.0px;width:6.0px;height:1.4px;background:#0000ff;opacity:0.55;"></div><div class="r" style="left:1238.0px;top:104.0px;width:22.0px;height:1.4px;background:#333333;opacity:0.55;"></div><div class="r" style="left:1238.0px;top:106.0px;width:21.0px;height:1.4px;background:#333333;opacity:0.55;"></div><div class="r" style="left:1238.0px;top:108.0px;width:20.0px;height:1.4px;background:#333333;opacity:0.55;"></div><div class="r" style="left:1238.0px;top:110.0px;width:33.0px;height:1.4px;background:#333333;opacity:0.55;"></div><div class="r" style="left:1238.0px;top:112.0px;width:39.0px;height:1.4px;background:#333333;opacity:0.55;"></div><div class="r" style="left:1238.0px;top:114.0px;width:8.0px;height:1.4px;background:#c000c0;opacity:0.55;"></div><div class="r" style="left:1246.0px;top:114.0px;width:1.0px;height:1.4px;background:#319331;opacity:0.55;"></div><div class="r" style="left:1247.0px;top:114.0px;width:33.0px;height:1.4px;background:#333333;opacity:0.55;"></div><div class="r" style="left:1281.0px;top:114.0px;width:1.0px;height:1.4px;background:#098658;opacity:0.55;"></div><div class="r" style="left:1282.0px;top:114.0px;width:1.0px;height:1.4px;background:#319331;opacity:0.55;"></div><div class="r" style="left:1284.0px;top:114.0px;width:2.0px;height:1.4px;background:#0000ff;opacity:0.55;"></div><div class="r" style="left:1287.0px;top:114.0px;width:17.0px;height:1.4px;background:#333333;opacity:0.55;"></div><div class="r" style="left:1238.0px;top:116.0px;width:30.0px;height:1.4px;background:#333333;opacity:0.55;"></div><div class="r" style="left:1233.0px;top:118.0px;width:4.0px;height:1.4px;background:#0000ff;opacity:0.55;"></div><div class="r" style="left:1238.0px;top:118.0px;width:9.0px;height:1.4px;background:#333333;opacity:0.55;"></div><div class="r" style="left:1233.0px;top:120.0px;width:4.0px;height:1.4px;background:#778899;opacity:0.55;"></div><div class="r" style="left:1238.0px;top:120.0px;width:4.0px;height:1.4px;background:#778899;opacity:0.55;"></div><div class="r" style="left:1243.0px;top:120.0px;width:15.0px;height:1.4px;background:#333333;opacity:0.55;"></div><div class="r" style="left:1259.0px;top:120.0px;width:5.0px;height:1.4px;background:#0000ff;opacity:0.55;"></div><div class="r" style="left:1265.0px;top:120.0px;width:1.0px;height:1.4px;background:#319331;opacity:0.55;"></div><div class="r" style="left:1266.0px;top:120.0px;width:11.0px;height:1.4px;background:#333333;opacity:0.55;"></div><div class="r" style="left:1277.0px;top:120.0px;width:1.0px;height:1.4px;background:#319331;opacity:0.55;"></div><div class="r" style="left:1231.0px;top:122.0px;width:1.0px;height:1.4px;background:#0431fa;opacity:0.55;"></div><div class="r" style="left:1231.0px;top:124.0px;width:6.0px;height:1.4px;background:#0000ff;opacity:0.55;"></div><div class="r" style="left:1238.0px;top:124.0px;width:1.0px;height:1.4px;background:#778899;opacity:0.55;"></div><div class="r" style="left:1240.0px;top:124.0px;width:4.0px;height:1.4px;background:#0000ff;opacity:0.55;"></div><div class="r" style="left:1245.0px;top:124.0px;width:5.0px;height:1.4px;background:#333333;opacity:0.55;"></div><div class="r" style="left:1343px;top:68px;width:15px;height:555px;background:#fff;border-left:1px solid #ececec;"></div><div class="r" style="left:1344px;top:68px;width:13px;height:2.5px;background:#222;"></div><div class="r" style="left:1344px;top:70.5px;width:6px;height:7px;background:#a8a8a8;"></div><div class="r" style="left:1357px;top:0px;width:1px;height:1019px;background:#b9b7a0;z-index:5;"></div><div class="r" style="left:266px;top:623px;width:1092px;height:1px;background:#dfe2e7;"></div><div class="r" style="left:266px;top:624px;width:1092px;height:47px;background:#fff;"></div><div class="r" style="left:266px;top:671px;width:1092px;height:1px;background:#dfe2e7;"></div><div class="r" style="left:278px;top:631px;width:87px;height:32px;background:#fff;border:1px solid #5d6471;border-radius:7px;"></div><svg class="r" style="left:288px;top:641px;" width="13" height="13" viewBox="0 0 13 13" fill="none"><rect x="0.5" y="0.5" width="11" height="11" rx="0.8" stroke="#1c2431" stroke-width="1.1" fill="none"/><rect x="0.5" y="0.5" width="11" height="2.8" fill="#1c2431"/><path d="M0.5 5.8h11M0.5 8.6h11M6 3v8.5" stroke="#1c2431" stroke-width="1.1"/></svg><div class="t" style="left:309.6px;top:638.73px;font-size:12.9px;line-height:18px;color:#1c2431;font-family:'Liberation Sans', sans-serif;">Preview</div><div class="r" style="left:373px;top:631px;width:89px;height:32px;background:#fff;border:1px solid #5d6471;border-radius:7px;"></div><svg class="r" style="left:381px;top:640px;" width="16" height="14" viewBox="0 0 16 14" fill="none"><g stroke="#1c2431" stroke-width="1.2" fill="none"><path d="M4.5 3.5L1.3 7l3.2 3.5M11.5 3.5L14.7 7l-3.2 3.5M9.3 2L6.7 12"/></g></svg><div class="t" style="left:404px;top:638.09px;font-size:13.3px;line-height:19px;color:#1c2431;font-family:'Liberation Sans', sans-serif;">Compile</div><div class="r" style="left:470px;top:631px;width:101px;height:32px;background:#fff;border:1px solid #5d6471;border-radius:7px;"></div><div class="r" style="left:539px;top:631px;width:1px;height:32px;background:#5d6471;"></div><svg class="r" style="left:478px;top:638px;" width="18" height="18" viewBox="0 0 18 18" fill="none"><path d="M13.2 2.2a4 4 0 0 0-4.6 5.3L2.7 13.4a1.3 1.3 0 0 0 1.9 1.9l5.9-5.9a4 4 0 0 0 5.3-4.6l-2.3 2.3-2.2-.6-.6-2.2z" stroke="#1c2431" stroke-width="1.1" stroke-linejoin="round" fill="none"/></svg><div class="t" style="left:501px;top:638.70px;font-size:13px;line-height:18px;color:#1c2431;font-family:'Liberation Sans', sans-serif;">Build</div><svg class="r" style="left:549px;top:643px;" width="11" height="8" viewBox="0 0 11 8" fill="none"><path d="M1.5 1.8l4 4 4-4" stroke="#1c2431" stroke-width="1.1" fill="none"/></svg><div class="r" style="left:579px;top:631px;width:72px;height:32px;background:#fff;border:1px solid #5d6471;border-radius:7px;"></div><div class="r" style="left:619px;top:631px;width:1px;height:32px;background:#5d6471;"></div><div class="t" style="left:588px;top:638.70px;font-size:13px;line-height:18px;color:#1c2431;font-family:'Liberation Sans', sans-serif;">Lint</div><svg class="r" style="left:629px;top:643px;" width="11" height="8" viewBox="0 0 11 8" fill="none"><path d="M1.5 1.8l4 4 4-4" stroke="#1c2431" stroke-width="1.1" fill="none"/></svg><div class="r" style="left:659px;top:631px;width:137px;height:32px;background:#fff;border:1px solid #5d6471;border-radius:7px;"></div><svg class="r" style="left:670px;top:638px;" width="19" height="18" viewBox="0 0 19 18" fill="none"><g stroke="#1c2431" stroke-width="1.1" fill="none" stroke-linejoin="round"><path d="M8.5 1.5H1v10.5h5.5l2 2.8 2-2.8H17V9"/><path d="M11.5 3.2c.3 1.6.9 2.2 2.5 2.5-1.6.3-2.2.9-2.5 2.5-.3-1.6-.9-2.2-2.5-2.5 1.6-.3 2.2-.9 2.5-2.5z"/><path d="M15.5 0.8c.2.9.5 1.2 1.4 1.4-.9.2-1.2.5-1.4 1.4-.2-.9-.5-1.2-1.4-1.4.9-.2 1.2-.5 1.4-1.4z"/></g></svg><div class="t" style="left:695.3px;top:638.02px;font-size:13.5px;line-height:19px;color:#1c2431;font-family:'Liberation Sans', sans-serif;">dbt Copilot</div><svg class="r" style="left:771px;top:642px;" width="12" height="9" viewBox="0 0 12 9" fill="none"><path d="M1.5 1.8l4.5 4.5 4.5-4.5" stroke="#1c2431" stroke-width="1.1" fill="none"/></svg><div class="r" style="left:808px;top:624px;width:1px;height:47px;background:#e4e6ea;"></div><div class="t" style="left:841.8px;top:639.73px;font-size:12.33px;line-height:17px;color:#2c3442;font-family:'Liberation Sans', sans-serif;">Results</div><div class="t" style="left:915.7px;top:639.03px;font-size:12.9px;line-height:18px;color:#2c3442;font-family:'Liberation Sans', sans-serif;">Code quality</div><div class="t" style="left:1021.5px;top:638.96px;font-size:13.1px;line-height:18px;color:#2c3442;font-family:'Liberation Sans', sans-serif;">Compiled code</div><div class="t" style="left:1141.5px;top:639.00px;font-size:13px;line-height:18px;color:#2c3442;font-family:'Liberation Sans', sans-serif;">Lineage</div><div class="r" style="left:1125px;top:668px;width:78px;height:3px;background:#8a93a0;"></div><svg class="r" style="left:266px;top:672px" width="1092" height="309"><defs><pattern id="dots" x="5.6" y="7.6" width="12.06" height="12.06" patternUnits="userSpaceOnUse"><rect x="0" y="0" width="1.2" height="1.2" fill="#c4c8ce"/></pattern></defs><rect width="1092" height="309" fill="#f7f8fa"/><rect width="1092" height="309" fill="url(#dots)"/></svg><svg class="r" style="left:0;top:0" width="1358" height="1019" viewBox="0 0 1358 1019" fill="none"><path d="M453 752.5H501" stroke="#3b4049" stroke-width="1.1" fill="none"/><path d="M497 749.0L502 752.5L497 756.0" stroke="#3b4049" stroke-width="1.1" fill="none"/><path d="M628.5 752.5C657.75 752.5 657.75 826.5 687 826.5" stroke="#3b4049" stroke-width="1.1" fill="none"/><path d="M404 826C452.5 826 452.5 863 501 863" stroke="#3b4049" stroke-width="1.1" fill="none"/><path d="M417 900C459.0 900 459.0 863 501 863" stroke="#3b4049" stroke-width="1.1" fill="none"/><path d="M497 859.5L502 863L497 866.5" stroke="#3b4049" stroke-width="1.1" fill="none"/><path d="M614 863.3C650.5 863.3 650.5 826.5 687 826.5" stroke="#3b4049" stroke-width="1.1" fill="none"/><path d="M682.5 823.0L687.5 826.5L682.5 830.0" stroke="#3b4049" stroke-width="1.1" fill="none"/><path d="M801 826.5H911" stroke="#3b4049" stroke-width="1.1" fill="none"/><path d="M906.5 823.0L911.5 826.5L906.5 830.0" stroke="#3b4049" stroke-width="1.1" fill="none"/><path d="M1113 826.5C1124 826.5 1129 818 1138.5 808M1113 826.5C1124 826.5 1129 835 1138.5 845.5" stroke="#3b4049" stroke-width="1.1" fill="none"/></svg><div class="r" style="left:292px;top:723px;width:161px;height:56px;background:#fff;border:1px solid #8a909a;border-radius:4px;"></div><div class="r" style="left:303px;top:737px;width:27px;height:27px;background:#9dd9d4;border-radius:3px;"></div><svg class="r" style="left:311.5px;top:740px;" width="10" height="11" viewBox="0 0 10 11" fill="none"><g stroke="#1c2431" stroke-width="0.9" fill="none"><ellipse cx="5" cy="2.2" rx="3.6" ry="1.5"/><path d="M1.4 2.2v6.6c0 .8 1.6 1.5 3.6 1.5s3.6-.7 3.6-1.5V2.2M1.4 4.4c0 .8 1.6 1.5 3.6 1.5s3.6-.7 3.6-1.5M1.4 6.6c0 .8 1.6 1.5 3.6 1.5s3.6-.7 3.6-1.5"/></g></svg><div class="t" style="left:303px;top:751.76px;font-size:8.4px;line-height:12px;color:#1c2431;font-family:'Liberation Mono', monospace;-webkit-text-stroke-width:0;width:27px;text-align:center;">SRC</div><div class="t" style="left:340.5px;top:745.47px;font-size:10.2px;line-height:14px;color:#1c2431;font-family:'Liberation Sans', sans-serif;">jaffle_shop.customers</div><div class="r" style="left:502px;top:723px;width:127px;height:56px;background:#fff;border:1px solid #8a909a;border-radius:4px;"></div><div class="r" style="left:513px;top:737px;width:27px;height:27px;background:#b3e1f7;border-radius:3px;"></div><svg class="r" style="left:521.5px;top:740px;" width="10" height="11" viewBox="0 0 10 11" fill="none"><g stroke="#1c2431" stroke-width="0.9" stroke-linejoin="round" fill="none"><path d="M5 0.6l4.4 2.3v5.2L5 10.4 0.6 8.1V2.9z"/><path d="M0.6 2.9L5 5.3l4.4-2.4M5 5.3v5.1"/></g></svg><div class="t" style="left:513px;top:751.76px;font-size:8.4px;line-height:12px;color:#1c2431;font-family:'Liberation Mono', monospace;-webkit-text-stroke-width:0;width:27px;text-align:center;">MDL</div><div class="t" style="left:550.5px;top:745.47px;font-size:10.2px;line-height:14px;color:#1c2431;font-family:'Liberation Sans', sans-serif;">stg_customers</div><div class="r" style="left:292px;top:796px;width:112px;height:57px;background:#fff;border:1px solid #8a909a;border-radius:4px;"></div><div class="r" style="left:303px;top:811px;width:27px;height:27px;background:#b3e1f7;border-radius:3px;"></div><svg class="r" style="left:311.5px;top:814px;" width="10" height="11" viewBox="0 0 10 11" fill="none"><g stroke="#1c2431" stroke-width="0.9" stroke-linejoin="round" fill="none"><path d="M5 0.6l4.4 2.3v5.2L5 10.4 0.6 8.1V2.9z"/><path d="M0.6 2.9L5 5.3l4.4-2.4M5 5.3v5.1"/></g></svg><div class="t" style="left:303px;top:825.76px;font-size:8.4px;line-height:12px;color:#1c2431;font-family:'Liberation Mono', monospace;-webkit-text-stroke-width:0;width:27px;text-align:center;">MDL</div><div class="t" style="left:340.5px;top:818.97px;font-size:10.2px;line-height:14px;color:#1c2431;font-family:'Liberation Sans', sans-serif;">stg_orders</div><div class="r" style="left:292px;top:870px;width:125px;height:56px;background:#fff;border:1px solid #8a909a;border-radius:4px;"></div><div class="r" style="left:303px;top:884px;width:27px;height:27px;background:#b3e1f7;border-radius:3px;"></div><svg class="r" style="left:311.5px;top:887px;" width="10" height="11" viewBox="0 0 10 11" fill="none"><g stroke="#1c2431" stroke-width="0.9" stroke-linejoin="round" fill="none"><path d="M5 0.6l4.4 2.3v5.2L5 10.4 0.6 8.1V2.9z"/><path d="M0.6 2.9L5 5.3l4.4-2.4M5 5.3v5.1"/></g></svg><div class="t" style="left:303px;top:898.76px;font-size:8.4px;line-height:12px;color:#1c2431;font-family:'Liberation Mono', monospace;-webkit-text-stroke-width:0;width:27px;text-align:center;">MDL</div><div class="t" style="left:340.5px;top:892.47px;font-size:10.2px;line-height:14px;color:#1c2431;font-family:'Liberation Sans', sans-serif;">stg_payments</div><div class="r" style="left:502px;top:834px;width:112px;height:56px;background:#fff;border:1px solid #8a909a;border-radius:4px;"></div><div class="r" style="left:513px;top:848px;width:27px;height:27px;background:#b3e1f7;border-radius:3px;"></div><svg class="r" style="left:521.5px;top:851px;" width="10" height="11" viewBox="0 0 10 11" fill="none"><g stroke="#1c2431" stroke-width="0.9" stroke-linejoin="round" fill="none"><path d="M5 0.6l4.4 2.3v5.2L5 10.4 0.6 8.1V2.9z"/><path d="M0.6 2.9L5 5.3l4.4-2.4M5 5.3v5.1"/></g></svg><div class="t" style="left:513px;top:862.76px;font-size:8.4px;line-height:12px;color:#1c2431;font-family:'Liberation Mono', monospace;-webkit-text-stroke-width:0;width:27px;text-align:center;">MDL</div><div class="t" style="left:550.5px;top:856.47px;font-size:10.2px;line-height:14px;color:#1c2431;font-family:'Liberation Sans', sans-serif;">fct_orders</div><div class="r" style="left:688px;top:796px;width:113px;height:57px;background:#fff;border:2px solid #1c2431;border-radius:5px;box-shadow:0 12px 24px rgba(0,0,0,0.14);"></div><div class="r" style="left:699px;top:811px;width:27px;height:27px;background:#b3e1f7;border-radius:3px;"></div><svg class="r" style="left:707.5px;top:814px;" width="10" height="11" viewBox="0 0 10 11" fill="none"><g stroke="#1c2431" stroke-width="0.9" stroke-linejoin="round" fill="none"><path d="M5 0.6l4.4 2.3v5.2L5 10.4 0.6 8.1V2.9z"/><path d="M0.6 2.9L5 5.3l4.4-2.4M5 5.3v5.1"/></g></svg><div class="t" style="left:699px;top:825.76px;font-size:8.4px;line-height:12px;color:#1c2431;font-family:'Liberation Mono', monospace;-webkit-text-stroke-width:0;width:27px;text-align:center;">MDL</div><div class="t" style="left:736.5px;top:818.97px;font-size:10.2px;line-height:14px;color:#1c2431;font-family:'Liberation Sans', sans-serif;">customers</div><div class="r" style="left:912px;top:796px;width:201px;height:57px;background:#fff;border:1px solid #8a909a;border-radius:4px;"></div><div class="r" style="left:923px;top:811px;width:27px;height:27px;background:#f9919e;border-radius:3px;"></div><svg class="r" style="left:931.5px;top:814px;" width="10" height="11" viewBox="0 0 10 11" fill="none"><g stroke="#1c2431" stroke-width="0.9" fill="none"><circle cx="2.5" cy="2" r="1.4"/><circle cx="8.5" cy="5.5" r="1.4"/><circle cx="3.5" cy="8.5" r="1.4"/><path d="M3.7 2.8l3.6 2M7.2 6.2l-2.6 1.6M2.8 3.4l.5 3.7"/></g></svg><div class="t" style="left:923px;top:825.76px;font-size:8.4px;line-height:12px;color:#1c2431;font-family:'Liberation Mono', monospace;-webkit-text-stroke-width:0;width:27px;text-align:center;">SEM</div><div class="t" style="left:960.5px;top:818.97px;font-size:10.2px;line-height:14px;color:#1c2431;font-family:'Liberation Sans', sans-serif;">dim_customers_test_for_parse</div><div class="r" style="left:932px;top:696px;width:193px;height:40px;background:#fff;border:1px solid #5d6471;border-radius:7px 0 0 7px;"></div><div class="t" style="left:944.8px;top:707.56px;font-size:12.8px;line-height:18px;color:#1c2431;font-family:'Liberation Sans', sans-serif;">2+customers+2</div><div class="r" style="left:1125px;top:696px;width:104px;height:40px;background:#f0f1f4;border:1px solid #5d6471;border-left:0;border-radius:0 7px 7px 0;"></div><div class="t" style="left:1136.5px;top:706.96px;font-size:13.1px;line-height:18px;color:#2c3442;font-family:'Liberation Sans', sans-serif;">Update Graph</div><div class="r" style="left:1245px;top:696px;width:40px;height:40px;background:#fff;border:1px solid #5d6471;border-radius:7px;"></div><svg class="r" style="left:1256px;top:707px;" width="18" height="18" viewBox="0 0 18 18" fill="none"><path d="M1.5 5V1.5h4M12.5 1.5h4V5M16.5 13v3.5h-4M5.5 16.5h-4V13" stroke="#1c2431" stroke-width="1.1" fill="none"/></svg><div class="r" style="left:1293px;top:696px;width:40px;height:40px;background:#fff;border:1px solid #5d6471;border-radius:7px;"></div><svg class="r" style="left:1304px;top:707px;" width="18" height="18" viewBox="0 0 18 18" fill="none"><path d="M2.5 13.5C2.5 8 6 4.5 11 4.5h4.5" stroke="#1c2431" stroke-width="1.2" fill="none"/><path d="M12.5 1.5l3 3-3 3" stroke="#1c2431" stroke-width="1.2" fill="none"/></svg><div class="r" style="left:0px;top:976px;width:1358px;height:5px;background:linear-gradient(rgba(0,0,0,0),rgba(0,0,0,0.08));"></div><div class="r" style="left:0px;top:980px;width:1358px;height:1px;background:#dcdfe4;"></div><div class="r" style="left:0px;top:981px;width:1358px;height:38px;background:#fff;"></div><div class="r" style="left:30px;top:981px;width:1px;height:38px;background:#e4e6ea;"></div><svg class="r" style="left:6px;top:996px;" width="10" height="7" viewBox="0 0 10 7" fill="none"><path d="M1 5.5l4-4 4 4" stroke="#4b5363" stroke-width="1.1" fill="none"/></svg><div class="r" style="left:34px;top:984px;width:941px;height:40px;border:1px solid #f7f7f8;border-radius:8px;"></div><div class="t" style="left:47.4px;top:993.63px;font-size:13.2px;line-height:18px;color:#5d6471;font-family:'Liberation Sans', sans-serif;">dbt build --select &lt;model_name&gt;</div><div class="r" style="left:986px;top:992px;width:40px;height:20px;background:#106b6e;border-radius:10px;"></div><svg class="r" style="left:991px;top:997px;" width="11" height="10" viewBox="0 0 11 10" fill="none"><path d="M1 5l3 3 6-6" stroke="#fff" stroke-width="1.2" fill="none"/></svg><div class="r" style="left:1008.5px;top:994.5px;width:15px;height:15px;background:#fff;border-radius:50%;"></div><div class="t" style="left:1038px;top:993.63px;font-size:12.6px;line-height:18px;color:#3a4150;font-family:'Liberation Sans', sans-serif;font-weight:bold;-webkit-text-stroke-width:0;">Defer to staging/production</div><svg class="r" style="left:1207px;top:994px;" width="15" height="15" viewBox="0 0 15 15" fill="none"><circle cx="7" cy="7" r="6" stroke="#5d6471" stroke-width="1" fill="none"/><path d="M5.2 5.5a1.8 1.8 0 1 1 2.5 1.7c-.5.2-.7.6-.7 1.1v.5" stroke="#5d6471" stroke-width="1" fill="none"/><circle cx="7" cy="10.5" r="0.7" fill="#5d6471"/></svg><div class="r" style="left:1232px;top:990px;width:75px;height:24px;background:#cdf5df;border:1px solid #a9ebc6;border-radius:12px;"></div><svg class="r" style="left:1244px;top:995px;" width="14" height="14" viewBox="0 0 14 14" fill="none"><circle cx="7" cy="7" r="5.8" stroke="#176b43" stroke-width="1.1" fill="none"/></svg><div class="t" style="left:1263.5px;top:995.36px;font-size:10.5px;line-height:15px;color:#176b43;font-family:'Liberation Sans', sans-serif;">Ready</div><div class="r" style="left:1315px;top:986px;width:34px;height:32px;background:#f6f7f9;border:1px solid #5d6471;border-radius:6px;"></div><svg class="r" style="left:1322px;top:998px;" width="20" height="8" viewBox="0 0 20 8" fill="none"><g fill="#1c2431"><circle cx="4.5" cy="4" r="1.6"/><circle cx="10" cy="4" r="1.6"/><circle cx="15.5" cy="4" r="1.6"/></g></svg><div class="r" style="left:1139px;top:721px;width:216px;height:264px;background:#fff;border-radius:8px;box-shadow:0 4px 14px rgba(0,0,0,0.12);"></div><div class="t" style="left:1160px;top:739.69px;font-size:13.3px;line-height:19px;color:#1c2431;font-family:'Liberation Sans', sans-serif;">View status details</div><div class="t" style="left:1160px;top:781.69px;font-size:13.3px;line-height:19px;color:#1c2431;font-family:'Liberation Sans', sans-serif;">Switch to dark mode</div><div class="t" style="left:1160px;top:823.69px;font-size:13.3px;line-height:19px;color:#1c2431;font-family:'Liberation Sans', sans-serif;">Restart IDE</div><div class="t" style="left:1160px;top:865.69px;font-size:13.3px;line-height:19px;color:#1c2431;font-family:'Liberation Sans', sans-serif;">Reinstall dependencies</div><div class="t" style="left:1160px;top:907.69px;font-size:13.3px;line-height:19px;color:#1c2431;font-family:'Liberation Sans', sans-serif;">Clean dbt project</div><div class="r" style="left:1148px;top:939px;width:193px;height:1px;background:#e8eaee;"></div><svg class="r" style="left:1159px;top:949px;" width="16" height="16" viewBox="0 0 16 16" fill="none"><circle cx="8" cy="8" r="7" fill="#3d4554"/><path d="M8 4v5" stroke="#fff" stroke-width="1.8"/><circle cx="8" cy="11.5" r="1" fill="#fff"/></svg><div class="t" style="left:1182.4px;top:949.89px;font-size:13.3px;line-height:19px;color:#1c2431;font-family:'Liberation Sans', sans-serif;">Rollback to remote</div><div class="r" style="left:1143px;top:722px;width:210px;height:258px;border:3px solid #b42318;"></div>
</body></html>
